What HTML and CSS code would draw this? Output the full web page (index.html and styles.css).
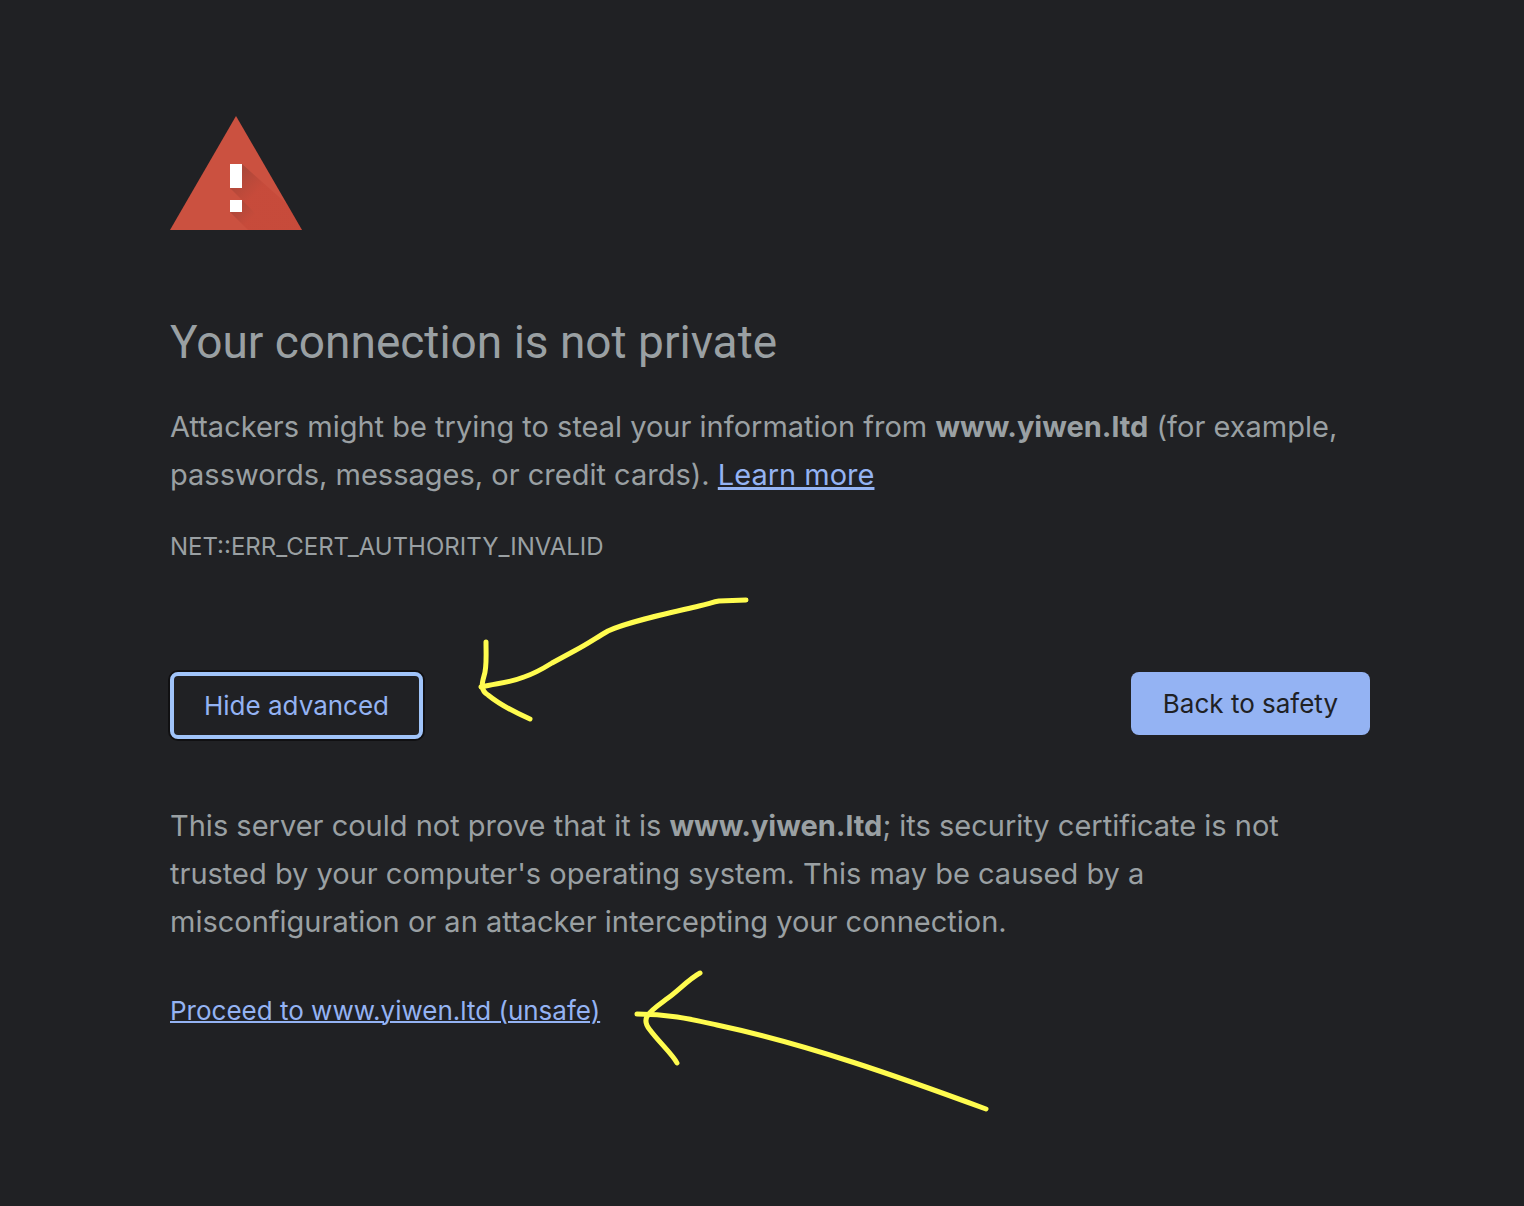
FILE: index.html
```html
<!DOCTYPE html>
<html lang="en">
<head>
<meta charset="utf-8">
<title>Privacy error</title>
<meta name="viewport" content="width=device-width, initial-scale=1">
<link rel="stylesheet" href="styles.css">
</head>
<body>
<main class="interstitial">
  <svg class="warning-icon" viewBox="0 0 132 114" aria-hidden="true">
    <defs>
      <linearGradient id="shade" gradientUnits="userSpaceOnUse" x1="66" y1="62" x2="84" y2="80">
        <stop offset="0" stop-color="#3e2723" stop-opacity=".22"/>
        <stop offset="1" stop-color="#b02a20" stop-opacity=".16"/>
      </linearGradient>
      <linearGradient id="shade-dot" gradientUnits="userSpaceOnUse" x1="66" y1="90" x2="80" y2="104">
        <stop offset="0" stop-color="#3e2723" stop-opacity=".22"/>
        <stop offset="1" stop-color="#b02a20" stop-opacity=".16"/>
      </linearGradient>
    </defs>
    <path fill="#cb5140" d="M66 0l66 114H0z"/>
    <path fill="url(#shade)" d="M72 48l45 40 15 26h-30L60 72z"/>
    <path fill="url(#shade-dot)" d="M72 84l30 30H78L60 96z"/>
    <path fill="#fff" d="M60 48h12v24H60zM60 84h12v12H60z"/>
  </svg>
  <h1 class="title">Your connection is not private</h1>
  <p class="text">Attackers might be trying to steal your information from <strong>www.yiwen.ltd</strong> (for example, passwords, messages, or credit cards). <a class="link" href="#learn-more">Learn more</a></p>
  <p class="error-code">NET::ERR_CERT_AUTHORITY_INVALID</p>
  <div class="actions">
    <button class="button button-secondary" type="button" aria-expanded="true" aria-controls="details">Hide advanced</button>
    <button class="button button-primary" type="button">Back to safety</button>
  </div>
  <section class="details" id="details">
    <p class="text">This server could not prove that it is <strong>www.yiwen.ltd</strong>; its security certificate is not trusted by your computer's operating system. This may be caused by a misconfiguration or an attacker intercepting your connection.</p>
    <p class="proceed"><a class="link" href="#proceed">Proceed to www.yiwen.ltd (unsafe)</a></p>
  </section>
  <svg class="arrow arrow-advanced" viewBox="470 590 290 140" aria-hidden="true">
    <path d="M746 600L719 601C713 602 708 604 699 606C665 614 627 622 608 631C596 638 586 645 576 650L552 663C544 668 536 673 524 677C509 683 498 683 481 687"/>
    <path d="M486 642C486 656 487 668 484 676C482 683 480 690 488 695C499 704 514 712 530 719"/>
  </svg>
  <svg class="arrow arrow-proceed" viewBox="620 960 380 160" aria-hidden="true">
    <path d="M637 1014C670 1014 694 1020 717 1025C807 1044 902 1078 986 1109"/>
    <path d="M700 973C689 979 679 990 668 998C660 1004 651 1010 648 1015C644 1020 646 1025 650 1030C659 1042 673 1055 677 1063"/>
  </svg>
</main>
</body>
</html>
```
FILE: styles.css
```css
body {
  margin: 0;
  background: #202124;
  color: #9aa0a3;
  font-family: Inter, "Liberation Sans", sans-serif;
}

.interstitial {
  position: relative;
  max-width: 1200px;
  margin: 0 auto;
  padding: 116px 154px 160px 170px;
}

.warning-icon {
  display: block;
  width: 132px;
  height: 114px;
}

.title {
  margin: 84px 0 33px;
  font-family: Roboto, "Liberation Sans", sans-serif;
  font-size: 46px;
  font-weight: 400;
  line-height: 56px;
}

.text {
  margin: 0;
  font-size: 29px;
  line-height: 48px;
}

.link {
  color: #94b3f3;
  text-decoration-thickness: 2px;
}

.text .link {
  text-decoration-thickness: 3px;
}

.error-code {
  margin: 32px 0 0;
  font-size: 24px;
  line-height: 32px;
}

.actions {
  display: flex;
  flex-wrap: wrap;
  align-items: flex-start;
  justify-content: space-between;
  gap: 16px;
  margin-top: 109px;
}

.button {
  box-sizing: border-box;
  border-radius: 8px;
  font: inherit;
  font-size: 26px;
  line-height: 31px;
  cursor: pointer;
}

.button-primary {
  padding: 16px 32px;
  border: 0;
  background: #94b3f3;
  color: #202124;
}

.button-secondary {
  padding: 14px 30px;
  border: 4px solid #a0c4fa;
  box-shadow: 0 0 0 2px #101012;
  background: transparent;
  color: #94b3f3;
}

.details {
  margin-top: 63px;
}

.proceed {
  margin: 48px 0 0;
  font-size: 26px;
  line-height: 34px;
}

/* Hand-drawn markers laid over the page */
.arrow {
  position: absolute;
  fill: none;
  stroke: #fffc4f;
  stroke-width: 5px;
  stroke-linecap: round;
  stroke-linejoin: round;
  pointer-events: none;
}

.arrow-advanced {
  left: 470px;
  top: 590px;
  width: 290px;
  height: 140px;
}

.arrow-proceed {
  left: 620px;
  top: 960px;
  width: 380px;
  height: 160px;
}
```
